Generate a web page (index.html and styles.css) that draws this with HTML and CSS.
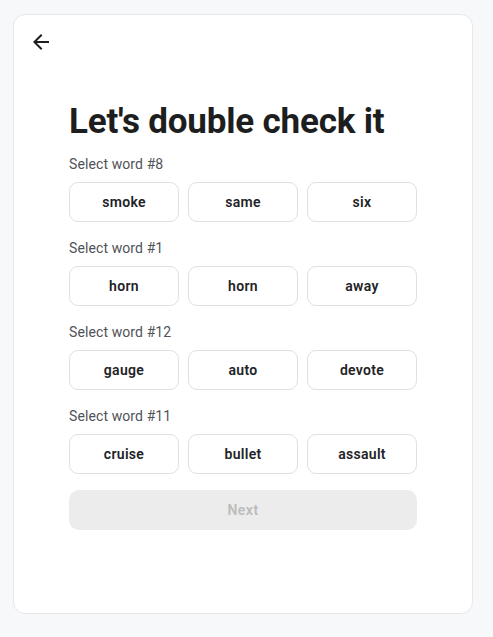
FILE: index.html
```html
<!DOCTYPE html>
<html>
<head>
<meta charset="utf-8">
<link rel="stylesheet" href="styles.css">
</head>
<body>
<div class="card">
  <button class="back" aria-label="Back">
    <svg width="24" height="24" viewBox="0 0 24 24"><path d="M20 11H7.83l5.59-5.59L12 4l-8 8 8 8 1.41-1.41L7.83 13H20v-2z" fill="#1d1e20"/></svg>
  </button>
  <div class="content">
    <h1 class="title">Let's double check it</h1>
    <div class="group">
      <div class="label">Select word #8</div>
      <div class="options"><button class="opt">smoke</button><button class="opt">same</button><button class="opt">six</button></div>
    </div>
    <div class="group">
      <div class="label">Select word #1</div>
      <div class="options"><button class="opt">horn</button><button class="opt">horn</button><button class="opt">away</button></div>
    </div>
    <div class="group">
      <div class="label">Select word #12</div>
      <div class="options"><button class="opt">gauge</button><button class="opt">auto</button><button class="opt">devote</button></div>
    </div>
    <div class="group">
      <div class="label">Select word #11</div>
      <div class="options"><button class="opt">cruise</button><button class="opt">bullet</button><button class="opt">assault</button></div>
    </div>
    <button class="next" disabled>Next</button>
  </div>
</div>
</body>
</html>
```
FILE: styles.css
```css
* { box-sizing: border-box; }
html, body { margin: 0; padding: 0; }
body {
  background: #f7f8fa;
  font-family: Roboto, "Liberation Sans", sans-serif;
  padding: 14px 20px 23px 13px;
}
.card {
  background: #fff;
  border: 1px solid #e6e7ea;
  border-radius: 12px;
  height: 600px;
  padding: 15px 0 0 15px;
}
.back {
  display: block;
  background: none;
  border: 0;
  padding: 0;
  width: 24px;
  height: 24px;
  cursor: pointer;
}
.content {
  width: 348px;
  margin: 0 0 0 40px;
  display: flex;
  flex-direction: column;
}
.title {
  margin: 48px 0 0 0;
  font-size: 35px;
  line-height: 40px;
  font-weight: 700;
  color: #1d1e20;
  letter-spacing: -0.2px;
}
.group { margin-top: 13px; }
.group + .group { margin-top: 17px; }
.label {
  font-size: 14px;
  line-height: 18px;
  color: #505257;
  letter-spacing: 0.1px;
}
.options {
  margin-top: 9px;
  display: grid;
  grid-template-columns: 1fr 1fr 1fr;
  gap: 9px;
}
.opt {
  height: 40px;
  background: #fff;
  border: 1px solid #dfe0e3;
  border-radius: 9px;
  font-family: inherit;
  font-size: 14px;
  font-weight: 600;
  letter-spacing: 0.3px;
  color: #222326;
  cursor: pointer;
}
.next {
  margin-top: 16px;
  height: 40px;
  border: 0;
  border-radius: 10px;
  background: #ececec;
  color: #bcbcbc;
  font-family: inherit;
  font-size: 14px;
  font-weight: 600;
  letter-spacing: 0.5px;
}
```
